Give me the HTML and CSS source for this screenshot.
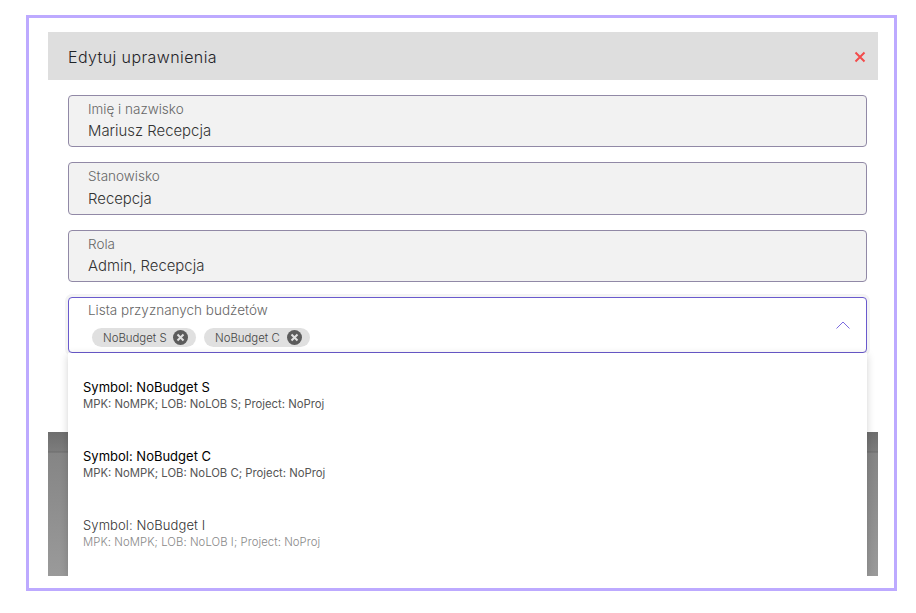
FILE: index.html
```html
<!DOCTYPE html>
<html lang="pl">
<head>
    <meta charset="UTF-8">
    <title>Edytuj uprawnienia</title>
    <link rel="stylesheet" href="styles.css">
</head>
<body>
    <div class="frame">
        <div class="modal">
            <div class="modal-header">
                <span class="modal-title">Edytuj uprawnienia</span>
                <svg class="close-icon" width="12" height="12" viewBox="0 0 12 12">
                    <path d="M1.5 1.5L10.5 10.5M10.5 1.5L1.5 10.5" stroke="#f34c4c" stroke-width="2" fill="none"/>
                </svg>
            </div>
            <div class="modal-body">
                <div class="field">
                    <div class="field-label">Imię i nazwisko</div>
                    <div class="field-value">Mariusz Recepcja</div>
                </div>
                <div class="field field-tall">
                    <div class="field-label">Stanowisko</div>
                    <div class="field-value">Recepcja</div>
                </div>
                <div class="field">
                    <div class="field-label">Rola</div>
                    <div class="field-value">Admin, Recepcja</div>
                </div>
                <div class="select-wrap">
                    <div class="select-box">
                        <div class="field-label">Lista przyznanych budżetów</div>
                        <div class="chips">
                            <span class="chip">NoBudget S
                                <svg class="chip-x" width="15" height="15" viewBox="0 0 15 15">
                                    <circle cx="7.5" cy="7.5" r="7.5" fill="#5c5c5c"/>
                                    <path d="M4.5 4.5L10.5 10.5M10.5 4.5L4.5 10.5" stroke="#e0e0e0" stroke-width="2" fill="none"/>
                                </svg>
                            </span>
                            <span class="chip">NoBudget C
                                <svg class="chip-x" width="15" height="15" viewBox="0 0 15 15">
                                    <circle cx="7.5" cy="7.5" r="7.5" fill="#5c5c5c"/>
                                    <path d="M4.5 4.5L10.5 10.5M10.5 4.5L4.5 10.5" stroke="#e0e0e0" stroke-width="2" fill="none"/>
                                </svg>
                            </span>
                        </div>
                        <svg class="chevron" width="14" height="8" viewBox="0 0 14 8">
                            <path d="M0.5 7.5L7 1L13.5 7.5" stroke="#7b6ae0" stroke-width="1" fill="none"/>
                        </svg>
                    </div>
                    <ul class="select-list">
                        <li class="option selected">
                            <div class="option-title">Symbol: NoBudget S</div>
                            <div class="option-sub">MPK: NoMPK; LOB: NoLOB S; Project: NoProj</div>
                        </li>
                        <li class="option selected">
                            <div class="option-title">Symbol: NoBudget C</div>
                            <div class="option-sub">MPK: NoMPK; LOB: NoLOB C; Project: NoProj</div>
                        </li>
                        <li class="option">
                            <div class="option-title">Symbol: NoBudget I</div>
                            <div class="option-sub">MPK: NoMPK; LOB: NoLOB I; Project: NoProj</div>
                        </li>
                    </ul>
                </div>
            </div>
            <div class="modal-footer"></div>
        </div>
    </div>
</body>
</html>
```

FILE: styles.css
```css
* {
    box-sizing: border-box;
}
body {
    margin: 0;
    background-color: #ffffff;
    font-family: Inter, "Liberation Sans", sans-serif;
    color: #333;
}
.frame {
    width: 871px;
    height: 576px;
    margin: 15px 0 0 26px;
    border: 3px solid #bdaaff;
    padding: 14px 16px 12px 19px;
    background-color: #fff;
}
.modal {
    display: flex;
    flex-direction: column;
    height: 544px;
    overflow: hidden;
}
.modal-header {
    display: flex;
    align-items: center;
    justify-content: space-between;
    height: 48px;
    flex-shrink: 0;
    padding: 2px 12px 0 20px;
    background-color: #dedede;
}
.modal-title {
    font-size: 16px;
    font-weight: 300;
    letter-spacing: 0.4px;
    color: #1f2328;
}
.modal-body {
    height: 352px;
    flex-shrink: 0;
    padding: 15px 11px 0 20px;
}
.modal-footer {
    flex-grow: 1;
    /* dark band with a thin line under it, then the lighter part */
    background: linear-gradient(#6e6e6e, #7c7c7c 19px, #6c6c6c 20px, #858585 21px, #9a9a9a);
}
.field {
    height: 52px;
    margin-bottom: 15px;
    padding: 5px 19px 0;
    border: 1px solid #9189a6;
    border-radius: 4px;
    background-color: #f2f2f2;
}
.field-tall {
    height: 53px;
}
.field-tall .field-value {
    margin-top: 5px;
}
.field-label {
    font-size: 13.5px;
    font-weight: 300;
    line-height: 17px;
    color: #666;
}
.field-value {
    margin-top: 4px;
    font-size: 14.9px;
    font-weight: 300;
    line-height: 18px;
    color: #333;
}
.select-wrap {
    position: relative;
}
.select-box {
    position: relative;
    height: 56px;
    padding: 4px 19px 0;
    border: 1px solid #6a5acd;
    border-radius: 4px;
    background-color: #fff;
    box-shadow: 0 0 0 3px #f4f4f4;
}
.chips {
    display: flex;
    gap: 8px;
    margin-top: 9px;
    margin-left: 4px;
}
.chip {
    display: flex;
    align-items: center;
    justify-content: space-between;
    height: 19px;
    width: 104px;
    padding: 0 8px 0 11px;
    border-radius: 10px;
    background-color: #e0e0e0;
    font-size: 11.4px;
    font-weight: 300;
    color: #444;
}
.chip + .chip {
    width: 106px;
}
.chip-x {
    flex-shrink: 0;
}
.chevron {
    position: absolute;
    top: 23px;
    right: 16px;
}
.select-list {
    position: absolute;
    top: 56px;
    left: 0;
    right: 0;
    height: 223px;
    margin: 0;
    padding: 0;
    list-style: none;
    background-color: #fff;
    box-shadow: 0 2px 8px rgba(0, 0, 0, 0.18);
    overflow: hidden;
}
.option {
    height: 69px;
    padding: 26px 15px 0;
}
.option-title {
    font-size: 13px;
    font-weight: 300;
    line-height: 16px;
    letter-spacing: 0.1px;
    color: #333;
}
.option-sub {
    margin-top: 2px;
    font-size: 11.3px;
    font-weight: 300;
    line-height: 14px;
    letter-spacing: 0.08px;
    color: #888;
}
.option.selected .option-title {
    color: #000;
    font-weight: 400;
    letter-spacing: 0;
}
.option.selected .option-sub {
    color: #555;
    font-weight: 400;
    letter-spacing: 0;
}
```
